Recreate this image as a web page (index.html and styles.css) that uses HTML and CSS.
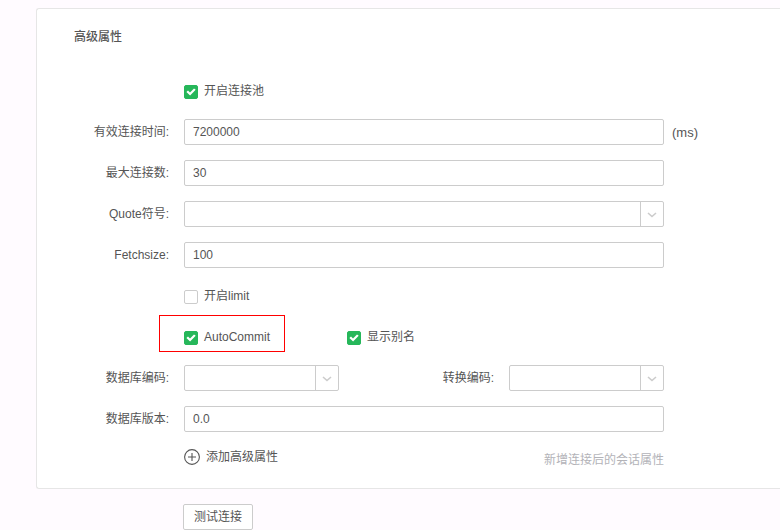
FILE: index.html
```html
<!DOCTYPE html>
<html lang="zh-CN">
<head>
<meta charset="utf-8">
<title>高级属性</title>
<link rel="stylesheet" href="styles.css">
</head>
<body>
<form class="page">
  <section class="panel">
    <h2 class="title">高级属性</h2>
    <div class="rows">
      <div class="row">
        <div class="field">
          <label class="check"><input type="checkbox" checked><span>开启连接池</span></label>
        </div>
      </div>
      <div class="row">
        <label class="label" for="timeout">有效连接时间:</label>
        <input class="field box" id="timeout" type="text" value="7200000">
        <span class="unit">(ms)</span>
      </div>
      <div class="row">
        <label class="label" for="max">最大连接数:</label>
        <input class="field box" id="max" type="text" value="30">
      </div>
      <div class="row">
        <label class="label" for="quote">Quote符号:</label>
        <div class="field select">
          <select class="box" id="quote"><option></option></select>
          <span class="arrow"><svg width="10" height="6" viewBox="0 0 10 6"><path d="M1 1l4 3.5L9 1"/></svg></span>
        </div>
      </div>
      <div class="row">
        <label class="label" for="fetch">Fetchsize:</label>
        <input class="field box" id="fetch" type="text" value="100">
      </div>
      <div class="row">
        <div class="field">
          <label class="check"><input type="checkbox"><span>开启limit</span></label>
        </div>
      </div>
      <div class="row">
        <div class="field checks">
          <label class="check marked"><input type="checkbox" checked><span>AutoCommit</span></label>
          <label class="check"><input type="checkbox" checked><span>显示别名</span></label>
        </div>
      </div>
      <div class="row">
        <label class="label" for="dbcode">数据库编码:</label>
        <div class="field pair">
          <div class="select">
            <select class="box" id="dbcode"><option></option></select>
            <span class="arrow"><svg width="10" height="6" viewBox="0 0 10 6"><path d="M1 1l4 3.5L9 1"/></svg></span>
          </div>
          <label class="label" for="tocode">转换编码:</label>
          <div class="select">
            <select class="box" id="tocode"><option></option></select>
            <span class="arrow"><svg width="10" height="6" viewBox="0 0 10 6"><path d="M1 1l4 3.5L9 1"/></svg></span>
          </div>
        </div>
      </div>
      <div class="row">
        <label class="label" for="version">数据库版本:</label>
        <input class="field box" id="version" type="text" value="0.0">
      </div>
      <div class="row">
        <div class="field extra">
          <button class="add" type="button">
            <svg width="16" height="16" viewBox="0 0 16 16"><circle cx="8" cy="8" r="7.4"/><path d="M8 4v8M4 8h8"/></svg>
            <span>添加高级属性</span>
          </button>
          <span class="hint">新增连接后的会话属性</span>
        </div>
      </div>
    </div>
  </section>
  <button class="test" type="button">测试连接</button>
</form>
</body>
</html>
```
FILE: styles.css
```css
* {
  box-sizing: border-box;
}

body {
  margin: 0;
  background: #fffbff;
  color: #555;
  font: 12px/18px "Liberation Sans", "Noto Sans CJK SC", sans-serif;
}

input,
select,
button {
  margin: 0;
  color: inherit;
  font: inherit;
}

.page {
  padding: 8px 0 0 36px;
}

.panel {
  padding: 19px 0 15px 37px;
  border: 1px solid #e6e6e6;
  border-right: 0;
  border-radius: 3px 0 0 3px;
  background: #fff;
}

.title {
  margin: 0 0 32px;
  font-size: 12px;
  font-weight: 500;
  line-height: 18px;
}

.rows {
  display: grid;
  gap: 15px;
}

.row {
  display: grid;
  grid-template-columns: 95px minmax(0, 480px) auto;
  column-gap: 15px;
  justify-content: start;
  align-items: center;
  height: 26px;
}

.label {
  text-align: right;
  white-space: nowrap;
}

.field {
  grid-column: 2;
}

.box {
  display: block;
  width: 100%;
  height: 26px;
  padding: 0 8px;
  border: 1px solid #ccc;
  border-radius: 2px;
  background: #fff;
  outline: 0;
  appearance: none;
}

.unit {
  margin: 2px 0 0 -7px;
  font-size: 13px;
}

.select {
  position: relative;
}

.arrow {
  position: absolute;
  top: 0;
  right: 0;
  bottom: 0;
  display: flex;
  align-items: center;
  justify-content: center;
  width: 24px;
  padding: 2px 2px 0 0;
  border-left: 1px solid #ccc;
  pointer-events: none;
}

.arrow svg {
  fill: none;
  stroke: #ccc;
  stroke-width: 1.6;
}

.check {
  position: relative;
  display: flex;
  align-items: center;
  gap: 6px;
  width: max-content;
}

.check input {
  display: grid;
  place-items: center;
  width: 14px;
  height: 14px;
  margin-top: 2px;
  border: 1px solid #ccc;
  border-radius: 2px;
  background: #fff;
  appearance: none;
}

.check input:checked {
  border-color: #26b75a;
  background: #26b75a;
}

.check input:checked::before {
  content: "";
  width: 10px;
  height: 8px;
  background: #fff;
  clip-path: polygon(4% 50%, 20% 32%, 40% 55%, 80% 5%, 97% 22%, 41% 94%);
}

.checks {
  display: grid;
  grid-template-columns: 155px 1fr;
  column-gap: 8px;
}

.marked::after {
  content: "";
  position: absolute;
  inset: -13px -15px -6px -25px;
  border: 1px solid #f00;
  pointer-events: none;
}

.pair {
  display: grid;
  grid-template-columns: 155px 1fr 155px;
  column-gap: 15px;
  align-items: center;
}

.extra {
  display: flex;
  align-items: center;
  justify-content: space-between;
  height: 26px;
}

.add {
  display: flex;
  align-items: center;
  gap: 6px;
  margin-bottom: 6px;
  padding: 0;
  border: 0;
  background: none;
}

.add svg {
  fill: none;
  stroke: #555;
  stroke-width: 1.1;
}

.hint {
  color: #b3b3b8;
}

.test {
  display: block;
  height: 26px;
  margin: 15px 0 0 147px;
  padding: 0 10px;
  border: 1px solid #ccc;
  border-radius: 2px;
  background: #fff;
}
```
